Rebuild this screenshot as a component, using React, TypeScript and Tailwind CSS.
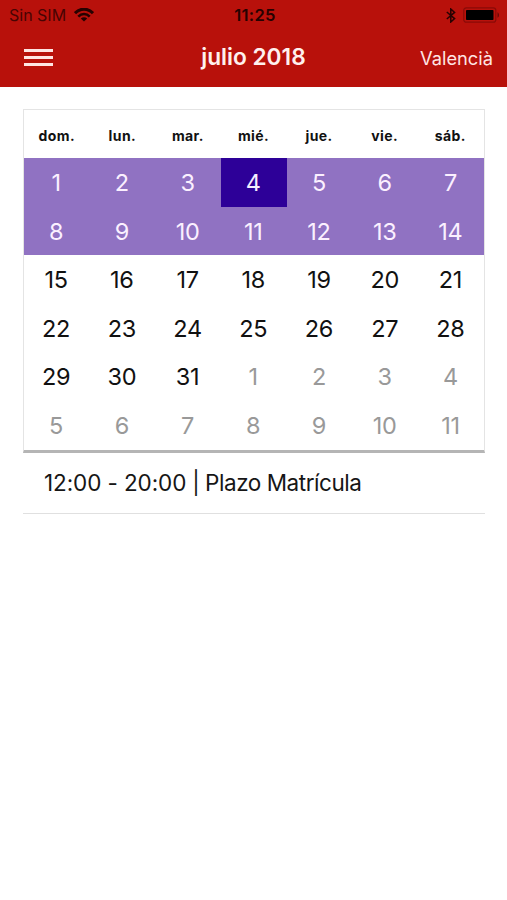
import { useState } from 'react';

interface Day {
  number: number;
  month: number;
}

const weekDays = ['dom.', 'lun.', 'mar.', 'mié.', 'jue.', 'vie.', 'sáb.'];

// July 2018 starts on Sunday, the grid is filled up with the first days of August
const days: Day[] = Array.from({ length: 42 }, (_, i) =>
  i < 31 ? { number: i + 1, month: 7 } : { number: i - 30, month: 8 }
);

const hasEvent = (day: Day) => day.month === 7 && day.number <= 14;

function StatusBar() {
  return (
    <div className="grid h-[30px] grid-cols-3 items-center px-2 text-[#260201]">
      <div className="flex items-center pl-px">
        <span className="text-[16px] leading-5 text-[#480403]">Sin SIM</span>
        <svg className="ml-2 h-[14px] w-5" viewBox="0 0 20 14" fill="none">
          <path d="M1 5.2C6-.2 14-.2 19 5.2" stroke="currentColor" strokeWidth="3" />
          <path d="M4.3 8.6C7.5 5.2 12.5 5.2 15.7 8.6" stroke="currentColor" strokeWidth="2.6" />
          <path d="M10 13.6L6.8 10.6C8.6 8.9 11.4 8.9 13.2 10.6Z" fill="currentColor" />
        </svg>
      </div>
      <span className="pl-[3px] text-center text-[16.5px] font-semibold leading-5 tracking-[0.3px]">
        11:25
      </span>
      <div className="-mr-px flex items-center justify-end">
        <svg className="mr-[7px] h-[15px] w-[10px]" viewBox="0 0 10 15" fill="none">
          <path
            d="M0.8 4L8.6 10.6L4.8 14V1L8.6 4.4L0.8 11"
            stroke="currentColor"
            strokeWidth="1.5"
          />
        </svg>
        <svg className="h-4 w-[37px]" viewBox="0 0 37 16">
          <rect x="0.8" y="0.8" width="32" height="14.4" rx="2.5" fill="none" stroke="#8a0a07" strokeWidth="1.2" />
          <rect x="3" y="3" width="27.5" height="10" rx="0.8" fill="#000" />
          <path d="M34.5 5.2C36.5 6.2 36.5 9.8 34.5 10.8Z" fill="#6a0806" />
        </svg>
      </div>
    </div>
  );
}

export default function App() {
  const [selected, setSelected] = useState<number>(3);

  const cellStyle = (day: Day, index: number) => {
    if (index === selected) {
      return 'bg-[#2d0098] text-[#f5eeff]';
    }
    if (hasEvent(day)) {
      return 'bg-[#9072c2] text-[#fbf0ff]';
    }
    return day.month === 7 ? 'text-[#111111]' : 'text-[#999999]';
  };

  return (
    <div className="min-h-screen w-full bg-white font-['Inter',sans-serif]">
      <header className="h-[87px] bg-[#b8110b]">
        <StatusBar />
        <div className="grid h-[54px] grid-cols-3 items-center px-[14px]">
          <button className="ml-[10px] flex w-[29px] flex-col gap-1" aria-label="Menu">
            <span className="h-[3px] w-full bg-[#ffe5e3]" />
            <span className="h-[3px] w-full bg-[#ffe5e3]" />
            <span className="h-[3px] w-full bg-[#ffe5e3]" />
          </button>
          <h1 className="whitespace-nowrap text-center text-[22.7px] font-semibold text-[#fff0ee]">
            julio 2018
          </h1>
          <button className="pt-[3px] text-right text-[18.3px] text-[#ffe5e3]">Valencià</button>
        </div>
      </header>

      <main className="pl-[23px] pr-[22px] pt-[22px]">
        <div className="h-[344px] border-x border-b-[3px] border-t border-x-[#e4e4e4] border-b-[#b5b5b5] border-t-[#e4e4e4]">
          <div className="grid h-[48.4px] grid-cols-7 items-center pr-px pt-[3px] text-center text-[14px] font-bold tracking-[0.4px] text-[#111111]">
            {weekDays.map((name) => (
              <span key={name}>{name}</span>
            ))}
          </div>
          <div className="grid auto-rows-[48.5px] grid-cols-7">
            {days.map((day, index) => (
              <button
                key={index}
                onClick={() => setSelected(index)}
                className={`pr-[1.5px] text-[23.5px] tracking-[-0.3px] ${cellStyle(day, index)}`}
              >
                {day.number}
              </button>
            ))}
          </div>
        </div>
        <div className="flex h-[61px] items-center border-b border-[#e0e0e0] pl-[21px] text-[22.5px] text-[#161616]">
          <span className="tracking-[-0.1px]">12:00 - 20:00</span>
          <span className="whitespace-pre tracking-[-0.45px]"> | Plazo Matrícula</span>
        </div>
      </main>
    </div>
  );
}
